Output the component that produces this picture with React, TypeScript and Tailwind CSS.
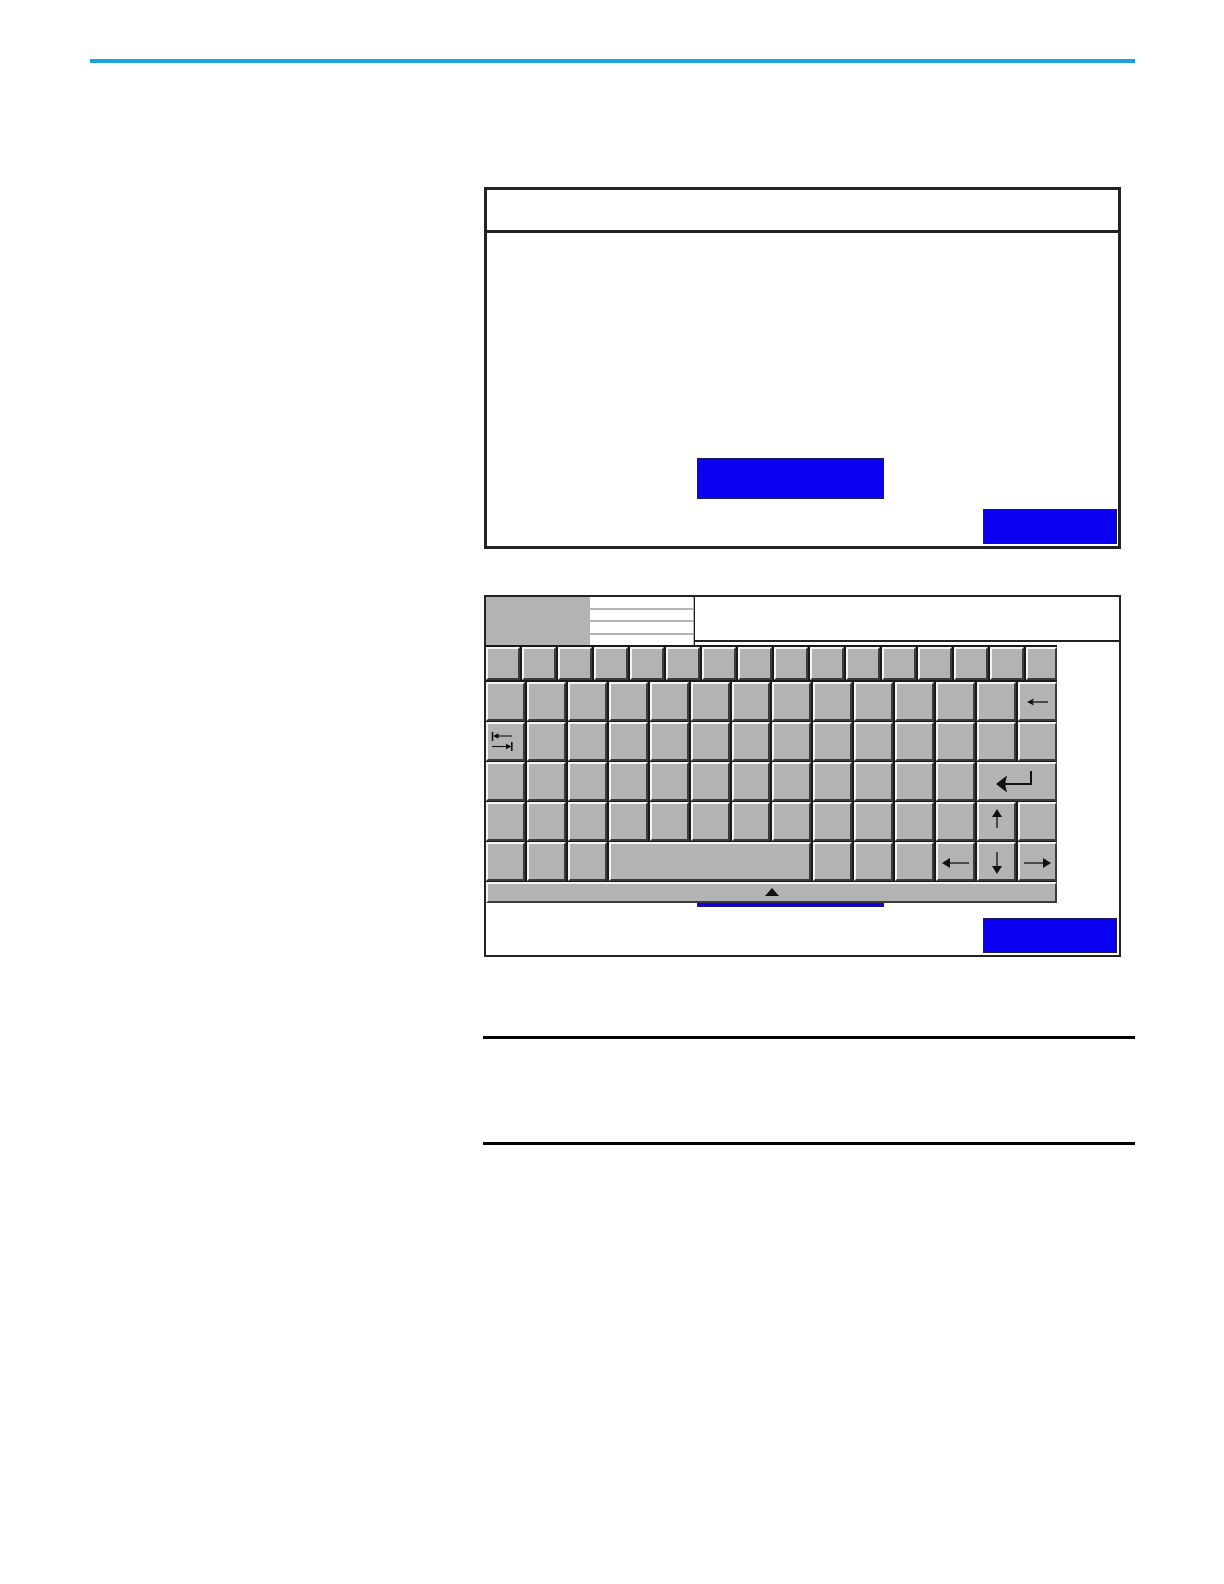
import React from "react";

const keyCls =
  "bg-[#b3b3b3] border-t-[2px] border-l-[2px] border-b-[2px] border-r-[2px] border-t-[#f4f4f4] border-l-[#f4f4f4] border-b-[#3b3b3b] border-r-[#3b3b3b] flex items-center justify-center";

function Key({ className = "", children }: { className?: string; children?: React.ReactNode }) {
  return <div className={`${keyCls} ${className}`}>{children}</div>;
}

const BackIcon = () => (
  <svg width="22" height="10" viewBox="0 0 22 10">
    <polygon points="0,5 7,1.5 5.5,5 7,8.5" fill="#111" />
    <path d="M5 5 H21" stroke="#111" strokeWidth="1.3" />
  </svg>
);

const TabIcon = () => (
  <svg width="22" height="21" viewBox="0 0 22 21">
    <path d="M1.5 1 V10" stroke="#111" strokeWidth="1.6" />
    <polygon points="2,5 7.5,2.2 7.5,7.8" fill="#111" />
    <path d="M6 5 H21" stroke="#111" strokeWidth="1.1" />
    <path d="M1 15.5 H16" stroke="#111" strokeWidth="1.1" />
    <polygon points="20.5,15.5 15,12.7 15,18.3" fill="#111" />
    <path d="M20.8 11 V20" stroke="#111" strokeWidth="1.6" />
  </svg>
);

const EnterIcon = () => (
  <svg width="38" height="23" viewBox="0 0 38 23">
    <polygon points="1,14 12,5.5 10,14 12,22.5" fill="#111" />
    <path d="M9 14 H37" stroke="#111" strokeWidth="2" />
    <path d="M36 1 V15" stroke="#111" strokeWidth="2" />
  </svg>
);

const UpIcon = () => (
  <svg width="12" height="19" viewBox="0 0 12 19">
    <polygon points="6,0 1,8 11,8" fill="#111" />
    <path d="M6 6 V19" stroke="#111" strokeWidth="1.3" />
  </svg>
);

const DownIcon = () => (
  <svg width="12" height="22" viewBox="0 0 12 22">
    <path d="M6 0 V15" stroke="#111" strokeWidth="1.3" />
    <polygon points="6,22 1,14 11,14" fill="#111" />
  </svg>
);

const LeftIcon = () => (
  <svg width="27" height="12" viewBox="0 0 27 12">
    <polygon points="0,6 8,1 8,11" fill="#111" />
    <path d="M6 6 H27" stroke="#111" strokeWidth="1.3" />
  </svg>
);

const RightIcon = () => (
  <svg width="27" height="12" viewBox="0 0 27 12">
    <path d="M0 6 H21" stroke="#111" strokeWidth="1.3" />
    <polygon points="27,6 19,1 19,11" fill="#111" />
  </svg>
);

const TriIcon = () => (
  <svg width="14" height="8" viewBox="0 0 14 8">
    <polygon points="7,0 0,8 14,8" fill="#111" />
  </svg>
);

function PanelContent({ borderCls, titleCls, b1Cls, b2Cls }: { borderCls: string; titleCls: string; b1Cls: string; b2Cls: string }) {
  return (
    <>
      <div className={titleCls} />
      <div className="flex flex-col">
        <div className={`bg-[#0b00ef] border border-[#1d1a5e] w-[187px] h-[41px] ${b1Cls}`} />
        <div className={`bg-[#0b00ef] border border-[#1d1a5e] w-[134px] h-[35px] self-end ${b2Cls}`} />
      </div>
    </>
  );
}

function Keyboard() {
  const row1 = Array.from({ length: 15 });
  const n13 = Array.from({ length: 13 });
  const n12 = Array.from({ length: 12 });
  const n3 = Array.from({ length: 3 });
  return (
    <div className="absolute left-0 top-0 flex flex-col">
      {/* input header */}
      <div className="flex w-[209px] h-[48px] bg-[#b3b3b3] border-r border-r-[#1a1a1a]">
        <div className="w-[104px]" />
        <div className="w-[103px] flex flex-col gap-[2px]">
          <div className="flex-1 bg-white" />
          <div className="flex-1 bg-white" />
          <div className="flex-1 bg-white" />
          <div className="flex-1 bg-white" />
        </div>
      </div>
      {/* keys */}
      <div className="w-[571px] bg-[#1a1a1a] flex flex-col pt-[2px]">
        <div className="grid grid-cols-[repeat(15,34px)_1fr] gap-x-[2px] h-[33px]">
          {row1.map((_, i) => (
            <Key key={i} />
          ))}
          <Key />
        </div>
        <div className="flex flex-col gap-px mt-[2px]">
          <div className="grid grid-cols-14 gap-x-[2px] h-[39px]">
            {n13.map((_, i) => (
              <Key key={i} />
            ))}
            <Key>
              <BackIcon />
            </Key>
          </div>
          <div className="grid grid-cols-14 gap-x-[2px] h-[39px]">
            <Key className="justify-start pl-[3px]">
              <TabIcon />
            </Key>
            {n13.map((_, i) => (
              <Key key={i} />
            ))}
          </div>
          <div className="grid grid-cols-14 gap-x-[2px] h-[39px]">
            {n12.map((_, i) => (
              <Key key={i} />
            ))}
            <Key className="col-span-2 pr-[6px]">
              <EnterIcon />
            </Key>
          </div>
          <div className="grid grid-cols-14 gap-x-[2px] h-[39px]">
            {n12.map((_, i) => (
              <Key key={i} />
            ))}
            <Key className="items-start pt-[5px]">
              <UpIcon />
            </Key>
            <Key />
          </div>
          <div className="grid grid-cols-14 gap-x-[2px] h-[39px]">
            {n3.map((_, i) => (
              <Key key={i} />
            ))}
            <Key className="col-span-5" />
            {n3.map((_, i) => (
              <Key key={i} />
            ))}
            <Key className="pt-[3px]">
              <LeftIcon />
            </Key>
            <Key className="items-end pb-[5px]">
              <DownIcon />
            </Key>
            <Key className="pt-[3px]">
              <RightIcon />
            </Key>
          </div>
          <Key className="h-[21px] items-start pt-[4px]">
            <TriIcon />
          </Key>
        </div>
      </div>
    </div>
  );
}

export default function App() {
  return (
    <div className="w-[1224px] min-h-[1584px] bg-white flex flex-col">
      <div className="mt-[59px] ml-[90px] w-[1045px] h-[4px] bg-[#1ba2da]" />

      {/* Panel 1 */}
      <div className="mt-[124px] ml-[484px] w-[637px] h-[362px] border-[3px] border-[#222] flex flex-col">
        <PanelContent
          borderCls=""
          titleCls="h-[43px] border-b-[3px] border-b-[#222]"
          b1Cls="mt-[225px] ml-[210px]"
          b2Cls="mt-[10px] mr-px"
        />
      </div>

      {/* Panel 2 */}
      <div className="relative mt-[46px] ml-[484px] w-[637px] h-[362px] border-[2px] border-[#222] flex flex-col">
        <PanelContent
          borderCls=""
          titleCls="h-[45px] border-b-[2px] border-b-[#222]"
          b1Cls="mt-[224px] ml-[211px]"
          b2Cls="mt-[11px] mr-[2px]"
        />
        <Keyboard />
      </div>

      <div className="mt-[79px] ml-[483px] w-[652px] h-[3px] bg-black" />
      <div className="mt-[103px] ml-[483px] w-[652px] h-[3px] bg-black" />
    </div>
  );
}
